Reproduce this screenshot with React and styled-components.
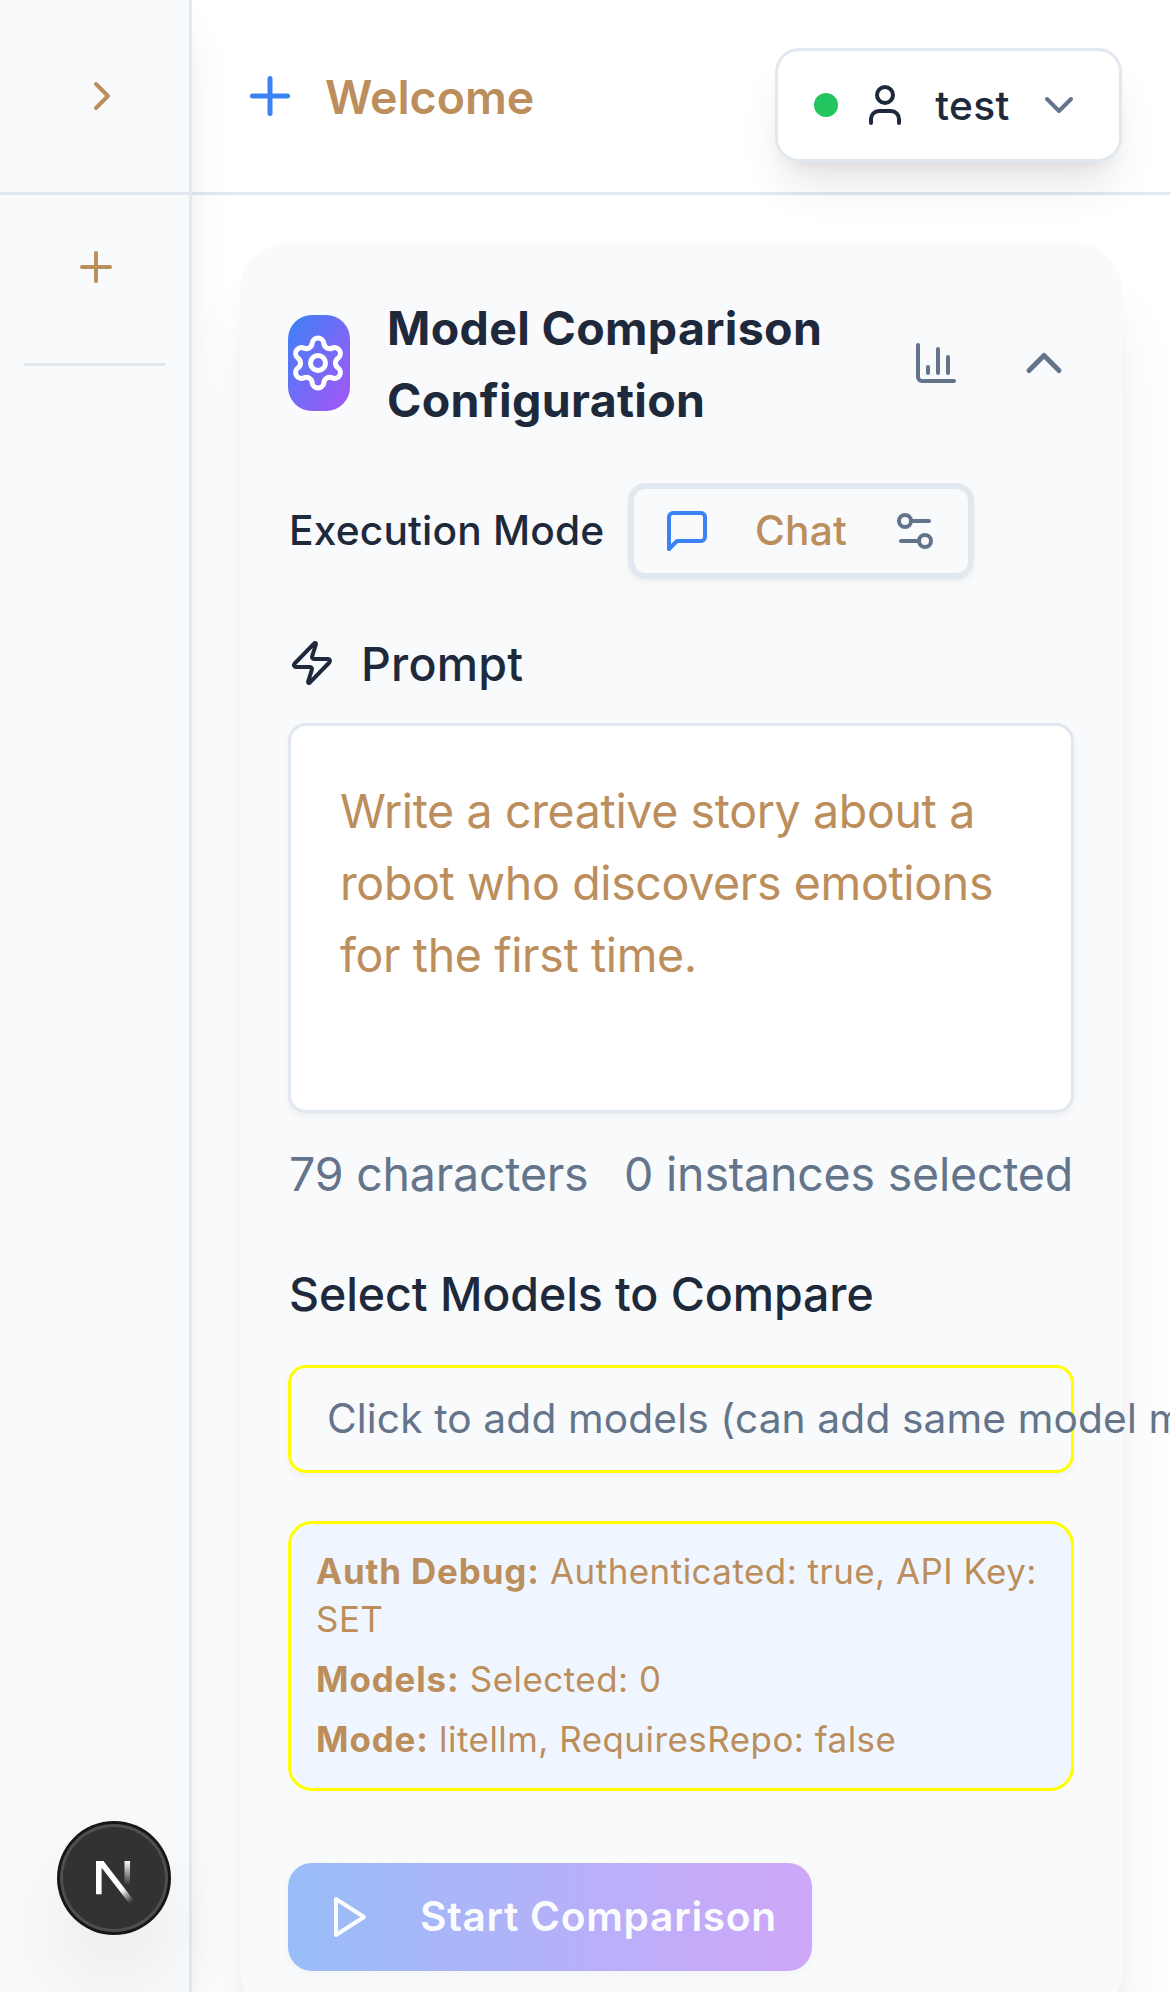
import React from "react";
import styled, { createGlobalStyle, css } from "styled-components";
import {
  ChartColumn,
  ChevronDown,
  ChevronRight,
  ChevronUp,
  Plus,
  Settings,
  Settings2,
  User,
  Zap,
} from "lucide-react";

const color = {
  page: "#ffffff",
  surface: "#f8fafc",
  border: "#e2e8f0",
  ink: "#1e293b",
  muted: "#64748b",
  accent: "#bb8e5c",
  blue: "#3b82f6",
  purple: "#a855f7",
  green: "#22c55e",
  highlight: "#ffff00",
  info: "#eff6ff",
};

const shadow = {
  sm: "0 3px 6px rgba(0, 0, 0, 0.05)",
  lg: "0 30px 45px -9px rgba(0, 0, 0, 0.1), 0 12px 18px -12px rgba(0, 0, 0, 0.1)",
  xl: "0 60px 75px -15px rgba(0, 0, 0, 0.1), 0 24px 30px -18px rgba(0, 0, 0, 0.1)",
};

const GlobalStyle = createGlobalStyle`
  * { box-sizing: border-box; }
  html, body { margin: 0; overflow: hidden; }
  body {
    background: ${color.page};
    color: ${color.ink};
    font-family: Inter, "Liberation Sans", sans-serif;
    -webkit-font-smoothing: antialiased;
  }
  button { font-family: inherit; margin: 0; }
  svg { display: block; flex: none; }
`;

const mediumText = css`
  font-size: 46.5px;
  line-height: 72px;
`;

const smallText = css`
  font-size: 40.7px;
  line-height: 60px;
`;

const Shell = styled.div`
  display: flex;
  width: 1170px;
  height: 1992px;
  overflow: hidden;
`;

const Sidebar = styled.aside`
  position: relative;
  z-index: 2;
  display: flex;
  flex-direction: column;
  flex: none;
  width: 192px;
  background: ${color.surface};
  border-right: 3px solid ${color.border};
  box-shadow: ${shadow.lg};
`;

const SidebarHead = styled.div`
  display: flex;
  align-items: center;
  justify-content: center;
  flex: none;
  height: 195px;
  padding-left: 15px;
  border-bottom: 3px solid ${color.border};
  color: ${color.accent};
`;

const SidebarSection = styled.div`
  display: flex;
  justify-content: center;
  flex: none;
  height: 171px;
  margin: 0 24px;
  padding: 48px 0 0 3px;
  border-bottom: 3px solid ${color.border};
  color: ${color.accent};
`;

const Column = styled.div`
  display: flex;
  flex-direction: column;
  flex: 1;
  min-width: 0;
`;

const Header = styled.header`
  position: relative;
  z-index: 1;
  display: flex;
  flex: none;
  justify-content: space-between;
  align-items: flex-start;
  height: 195px;
  padding: 48px 48px 0;
  border-bottom: 3px solid ${color.border};
`;

const Brand = styled.div`
  display: flex;
  align-items: center;
  gap: 25px;
  height: 96px;
  color: ${color.blue};
`;

const BrandName = styled.span`
  ${mediumText}
  padding-top: 2px;
  font-weight: 600;
  letter-spacing: -0.05px;
  color: ${color.accent};
`;

const UserButton = styled.button`
  display: flex;
  align-items: center;
  gap: 24px;
  height: 114px;
  padding: 0 36px;
  border: 3px solid ${color.border};
  border-radius: 24px;
  background: ${color.page};
  color: ${color.ink};
  box-shadow: ${shadow.lg};
`;

const StatusDot = styled.span`
  width: 24px;
  height: 24px;
  margin-right: -1px;
  border-radius: 50%;
  background: ${color.green};
`;

const UserName = styled.span`
  ${smallText}
  width: 78px;
  padding: 2px 0 0 1px;
  font-weight: 500;
  letter-spacing: 0.35px;
`;

const Main = styled.main`
  flex: none;
  padding: 48px;
`;

const Card = styled.section`
  height: 1776px;
  padding: 48px;
  border-radius: 48px;
  background: ${color.surface};
  box-shadow: ${shadow.xl};
`;

const CardHead = styled.div`
  display: flex;
  align-items: center;
  height: 144px;
`;

const GearTile = styled.span`
  display: flex;
  align-items: center;
  flex: none;
  width: 62px;
  height: 96px;
  margin-right: 37px;
  border-radius: 24px;
  background: linear-gradient(to bottom right, ${color.blue}, ${color.purple});
  color: #ffffff;
`;

const CardTitle = styled.h2`
  ${mediumText}
  flex: 1;
  margin: 0;
  padding-top: 2px;
  font-weight: 700;
  letter-spacing: 0.33px;
`;

const HeadActions = styled.div`
  display: flex;
  align-items: center;
  gap: 54px;
  color: ${color.muted};
`;

const ModeRow = styled.div`
  display: flex;
  align-items: center;
  margin-top: 48px;
`;

const ModeLabel = styled.span`
  ${smallText}
  width: 340px;
  padding-left: 1px;
  font-weight: 500;
  letter-spacing: 0.17px;
`;

const ModeButton = styled.button`
  display: flex;
  align-items: center;
  width: 346px;
  height: 96px;
  padding: 0 29px;
  border: 6px solid ${color.border};
  border-radius: 18px;
  background: ${color.surface};
  color: ${color.muted};
  box-shadow: ${shadow.sm};
`;

const ModeName = styled.span`
  ${smallText}
  flex: 1;
  padding-left: 44px;
  text-align: left;
  font-weight: 500;
  letter-spacing: 0.2px;
  color: ${color.accent};
`;

const PromptLabel = styled.div`
  ${mediumText}
  display: flex;
  align-items: center;
  gap: 25px;
  height: 72px;
  margin-top: 48px;
  font-weight: 500;
  letter-spacing: 0.25px;

  span { padding-top: 2px; }
`;

const PromptBox = styled.div`
  ${mediumText}
  height: 390px;
  margin-top: 24px;
  padding: 49px 40px 0 49px;
  border: 3px solid ${color.border};
  border-radius: 18px;
  background: ${color.page};
  box-shadow: ${shadow.sm};
  letter-spacing: -0.36px;
  color: ${color.accent};
`;

const Stats = styled.div`
  ${mediumText}
  display: flex;
  justify-content: space-between;
  margin-top: 25px;
  padding: 0 1px;
  letter-spacing: -0.2px;
  color: ${color.muted};
`;

const SectionTitle = styled.h3`
  ${mediumText}
  margin: 48px 0 0;
  padding-left: 1px;
  font-weight: 500;
  letter-spacing: -0.08px;
`;

const ModelSelect = styled.div`
  ${smallText}
  display: flex;
  align-items: center;
  height: 108px;
  margin-top: 35px;
  padding: 0 36px;
  border: 3px solid ${color.highlight};
  border-radius: 18px;
  box-shadow: ${shadow.sm};
  letter-spacing: 0.13px;
  white-space: nowrap;
  color: ${color.muted};
`;

const DebugPanel = styled.div`
  display: flex;
  flex-direction: column;
  gap: 12px;
  height: 270px;
  margin-top: 48px;
  padding: 23px 20px 24px 25px;
  border: 3px solid ${color.highlight};
  border-radius: 24px;
  background: ${color.info};
  font-size: 34.9px;
  line-height: 48px;
  color: ${color.accent};
`;

const DebugLine = styled.div`
  letter-spacing: 0.5px;

  strong {
    font-weight: 700;
    letter-spacing: 0.88px;
  }
`;

const StartButton = styled.button`
  display: flex;
  align-items: center;
  gap: 48px;
  width: 524px;
  height: 108px;
  margin-top: 72px;
  padding: 0 36px;
  border: 0;
  border-radius: 24px;
  background: linear-gradient(to right, ${color.blue}, ${color.purple});
  box-shadow: ${shadow.sm};
  opacity: 0.5;
  color: #ffffff;

  span {
    ${smallText}
    font-weight: 600;
    letter-spacing: 0.7px;
    white-space: nowrap;
  }
`;

const DevBadge = styled.div`
  position: fixed;
  z-index: 3;
  left: 60px;
  bottom: 60px;
  display: flex;
  align-items: center;
  justify-content: center;
  width: 108px;
  height: 108px;
  border-radius: 50%;
  background: #323232;
  box-shadow: 0 0 0 3px #171717, inset 0 0 0 3px rgba(255, 255, 255, 0.14),
    0 48px 96px -24px rgba(0, 0, 0, 0.24);
`;

function OutlineIcon({ size, children }) {
  return (
    <svg width={size} height={size} viewBox="0 0 24 24" fill="none" stroke="currentColor"
      strokeWidth="2" strokeLinecap="round" strokeLinejoin="round">
      {children}
    </svg>
  );
}

function NextMark() {
  return (
    <svg width="108" height="108" viewBox="0 0 36 36" fill="none">
      <defs>
        <linearGradient id="diagonal" gradientUnits="userSpaceOnUse" x1="9.956" y1="11.123" x2="15.478" y2="17.967">
          <stop stopColor="#fff" />
          <stop offset="0.604" stopColor="#fff" stopOpacity="0" />
        </linearGradient>
        <linearGradient id="stem" gradientUnits="userSpaceOnUse" x1="11.822" y1="1.4" x2="11.791" y2="9.625">
          <stop stopColor="#fff" />
          <stop offset="1" stopColor="#fff" stopOpacity="0" />
        </linearGradient>
        <clipPath id="cap">
          <rect x="0" y="1.5" width="18" height="18" />
        </clipPath>
      </defs>
      <g transform="translate(10.6 10.83)" strokeWidth="1.86" clipPath="url(#cap)">
        <path d="M13.3 15.2 L2.34 1 V12.6" stroke="url(#diagonal)" />
        <path d="M11.825 1.5 V13.1" stroke="url(#stem)" />
      </g>
    </svg>
  );
}

export default function App() {
  return (
    <>
      <GlobalStyle />
      <Shell>
        <Sidebar>
          <SidebarHead>
            <ChevronRight size={48} />
          </SidebarHead>
          <SidebarSection>
            <Plus size={48} />
          </SidebarSection>
        </Sidebar>
        <Column>
          <Header>
            <Brand>
              <Plus size={60} />
              <BrandName>Welcome</BrandName>
            </Brand>
            <UserButton>
              <StatusDot />
              <User size={48} />
              <UserName>test</UserName>
              <ChevronDown size={48} color={color.muted} />
            </UserButton>
          </Header>
          <Main>
            <Card>
              <CardHead>
                <GearTile>
                  <Settings size={60} />
                </GearTile>
                <CardTitle>
                  Model Comparison
                  <br />
                  Configuration
                </CardTitle>
                <HeadActions>
                  <ChartColumn size={48} />
                  <ChevronUp size={60} />
                </HeadActions>
              </CardHead>
              <ModeRow>
                <ModeLabel>Execution Mode</ModeLabel>
                <ModeButton>
                  <OutlineIcon size={48}>
                    <path
                      d="M21 15a2 2 0 0 1-2 2H7l-4 4V5a2 2 0 0 1 2-2h14a2 2 0 0 1 2 2z"
                      stroke={color.blue}
                    />
                  </OutlineIcon>
                  <ModeName>Chat</ModeName>
                  <Settings2 size={48} />
                </ModeButton>
              </ModeRow>
              <PromptLabel>
                <Zap size={48} />
                <span>Prompt</span>
              </PromptLabel>
              <PromptBox>
                Write a creative story about a
                <br />
                robot who discovers emotions
                <br />
                for the first time.
              </PromptBox>
              <Stats>
                <span>79 characters</span>
                <span>0 instances selected</span>
              </Stats>
              <SectionTitle>Select Models to Compare</SectionTitle>
              <ModelSelect>Click to add models (can add same model multiple times)</ModelSelect>
              <DebugPanel>
                <DebugLine>
                  <strong>Auth Debug:</strong> Authenticated: true, API Key: SET
                </DebugLine>
                <DebugLine>
                  <strong>Models:</strong> Selected: 0
                </DebugLine>
                <DebugLine>
                  <strong>Mode:</strong> litellm, RequiresRepo: false
                </DebugLine>
              </DebugPanel>
              <StartButton>
                <OutlineIcon size={48}>
                  <polygon points="6 3 20 12 6 21 6 3" />
                </OutlineIcon>
                <span>Start Comparison</span>
              </StartButton>
            </Card>
          </Main>
        </Column>
      </Shell>
      <DevBadge>
        <NextMark />
      </DevBadge>
    </>
  );
}
